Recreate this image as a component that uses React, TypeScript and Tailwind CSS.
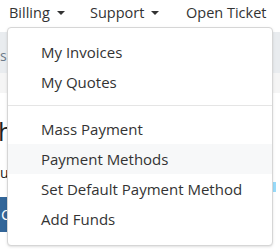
import React from 'react';

const menu = [
  ['My Invoices', 'My Quotes'],
  ['Mass Payment', 'Payment Methods', 'Set Default Payment Method', 'Add Funds'],
];

function Caret() {
  return <span className="ml-[7px] inline-block h-0 w-0 border-x-[4px] border-t-[4px] border-x-transparent border-t-[#333] align-middle" />;
}

export default function App() {
  return (
    <div className="relative h-[249px] w-[280px] overflow-hidden bg-white font-['Open_Sans',sans-serif] text-[#333]">
      <nav className="flex h-[32px] items-start pl-[9px] pt-[3px] text-[14.5px] leading-[20px]">
        <span className="flex w-[81px] items-center">Billing<Caret /></span>
        <span className="flex w-[96px] items-center">Support<Caret /></span>
        <span>Open Ticket</span>
      </nav>
      <div className="h-[41px] bg-[#e9ecef] pt-[14px] text-[14px] leading-[20px] text-[#6c7a89]">s</div>
      <div className="h-[20px] bg-[#f5f5f5]" />
      <div className="pt-[22px]">
        <div className="-ml-[2px] text-[26px] leading-[32px] text-[#222]">h</div>
        <div className="mt-[16px] text-[14px] leading-[20px] text-[#222]">ur</div>
        <div className="ml-[273px] mt-[-1px] h-[10px] w-[3px] bg-[#99dcfb]" />
        <div className="mt-[5px] flex h-[35px] w-[40px] items-center bg-[#336699] pl-[1px] text-[15px] text-white">C</div>
      </div>

      <div className="absolute left-[7px] top-[27px] w-[266px] rounded-[4px] border border-[#d6d6d6] bg-white pb-[11px] pt-[9px] text-[15px] leading-[30px] shadow-sm">
        {menu.map((group, gi) => (
          <div key={gi}>
            {gi > 0 && <div className="my-[8px] h-px bg-[#e5e5e5]" />}
            {group.map((item) => (
              <div key={item} className={`pl-[33px] ${item === 'Payment Methods' ? 'bg-[#f7f8f9]' : ''}`}>
                {item}
              </div>
            ))}
          </div>
        ))}
      </div>
    </div>
  );
}
